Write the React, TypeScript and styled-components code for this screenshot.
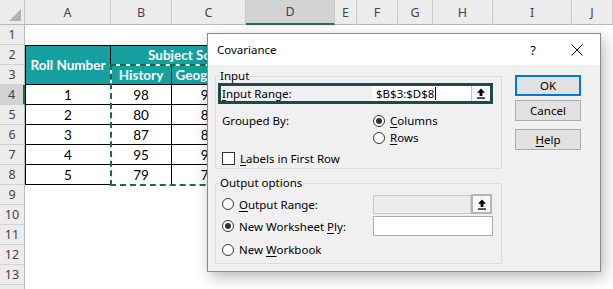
import styled, { createGlobalStyle } from 'styled-components';

const GlobalStyle = createGlobalStyle`
  html, body { margin: 0; padding: 0; background: #fff; }
  body { font-family: "Noto Sans", "Open Sans", sans-serif; }
`;

const columns = ['A', 'B', 'C', 'D', 'E', 'F', 'G', 'H', 'I', 'J'];
const rowCount = 14;
const labelledRows = 13;

const records = [
  { roll: 1, history: 98, geography: 92, economics: 88 },
  { roll: 2, history: 80, geography: 85, economics: 79 },
  { roll: 3, history: 87, geography: 84, economics: 91 },
  { roll: 4, history: 95, geography: 90, economics: 86 },
  { roll: 5, history: 79, geography: 75, economics: 82 },
];

const Page = styled.div`
  position: relative;
  width: 613px;
  height: 289px;
  overflow: hidden;
  background: #fff;
`;

const Sheet = styled.div`
  display: grid;
  grid-template-columns: 25px 86px 61px 74px 89px 22px 41px 35px 60px 79px 1fr;
  grid-template-rows: 25px repeat(${rowCount}, 20px);
  width: 613px;
  height: 289px;
`;

const Corner = styled.div`
  grid-column: 1;
  grid-row: 1;
  background: #ececec;
  border-right: 1px solid #c6c6c6;
  border-bottom: 1px solid #b9b9b9;
  box-sizing: border-box;
  display: flex;
  align-items: flex-end;
  justify-content: flex-end;
  padding: 0 3px 3px 0;
`;

const ColHead = styled.div<{ $col: number; $active?: boolean }>`
  grid-column: ${(p) => p.$col};
  grid-row: 1;
  box-sizing: border-box;
  display: flex;
  align-items: center;
  justify-content: center;
  background: ${(p) => (p.$active ? '#d3d3d3' : '#ececec')};
  border-right: 1px solid #c9c9c9;
  border-bottom: ${(p) => (p.$active ? '2px solid #217346' : '1px solid #b9b9b9')};
  font-size: 12.5px;
  color: #444;
`;

const RowHead = styled.div<{ $row: number; $active?: boolean }>`
  grid-column: 1;
  grid-row: ${(p) => p.$row};
  box-sizing: border-box;
  display: flex;
  align-items: center;
  justify-content: center;
  background: ${(p) => (p.$active ? '#d3d3d3' : '#ececec')};
  border-bottom: 1px solid #d2d2d2;
  border-right: ${(p) => (p.$active ? '2px solid #217346' : '1px solid #b9b9b9')};
  font-size: 12.5px;
  color: #444;
`;

const Cell = styled.div<{
  $col: string;
  $row: string;
  $teal?: boolean;
  $top?: boolean;
  $left?: boolean;
  $align?: string;
}>`
  grid-column: ${(p) => p.$col};
  grid-row: ${(p) => p.$row};
  box-sizing: border-box;
  display: flex;
  align-items: center;
  justify-content: ${(p) => p.$align || 'center'};
  padding: ${(p) => (p.$align ? '0 0 0 37px' : '0')};
  background: ${(p) => (p.$teal ? '#17a0a0' : '#fff')};
  color: ${(p) => (p.$teal ? '#fff' : '#000')};
  font-family: Lato, "Open Sans", sans-serif;
  font-size: 13.5px;
  font-weight: ${(p) => (p.$teal ? 700 : 400)};
  white-space: nowrap;
  overflow: hidden;
  border-right: 1px solid #000;
  border-bottom: 1px solid #000;
  border-top: ${(p) => (p.$top ? '1px solid #000' : 'none')};
  border-left: ${(p) => (p.$left ? '1px solid #000' : 'none')};
`;

const CopyMarquee = styled.div`
  grid-column: 3 / 6;
  grid-row: 4 / 10;
  margin: -1px 0 -1px -1px;
  position: relative;
  border: 2px solid #fff;
  pointer-events: none;

  &::after {
    content: '';
    position: absolute;
    inset: -2px;
    border: 2px dashed #1f6b43;
  }
`;

/* dialog */

const Dialog = styled.div`
  position: absolute;
  left: 207px;
  top: 33px;
  width: 394px;
  height: 239px;
  box-sizing: border-box;
  border: 1px solid #8a8a8a;
  background: #f0f0f0;
  box-shadow: 3px 5px 14px rgba(0, 0, 0, 0.28);
  font-family: "Noto Sans", "Open Sans", sans-serif;
  font-size: 11.5px;
  color: #000;
  display: flex;
  flex-direction: column;
`;

const TitleBar = styled.div`
  height: 31px;
  background: #fff;
  display: flex;
  align-items: center;
  padding: 0 17px 0 9px;
`;

const Title = styled.span`
  flex: 1;
  font-size: 11.5px;
`;

const HelpMark = styled.span`
  width: 12px;
  margin-right: 32px;
  text-align: center;
  font-size: 13px;
`;

const Body = styled.div`
  display: grid;
  grid-template-columns: 287px 66px;
  column-gap: 13px;
  align-items: start;
  padding: 4px 0 0 7px;
`;

const LeftColumn = styled.div`
  display: flex;
  flex-direction: column;
  gap: 7px;
`;

const Group = styled.fieldset<{ $h: number }>`
  margin: 0;
  padding: 0;
  min-width: 0;
  height: ${(p) => p.$h}px;
  box-sizing: border-box;
  border: 1px solid #dcdcdc;
`;

const Legend = styled.legend`
  margin-left: 3px;
  padding: 0 1px;
  line-height: 14px;
  font-size: 11.5px;
`;

const RangeBox = styled.div`
  margin-left: 2px;
  width: 275px;
  height: 21px;
  box-sizing: border-box;
  border: 3px solid #1c4b4a;
  display: flex;
  background: #f0f0f0;
`;

const RangeLabel = styled.span`
  flex: 1;
  padding-left: 1px;
  line-height: 15px;
`;

const RangeField = styled.div`
  width: 99px;
  background: #fff;
  display: flex;
  align-items: center;
  padding-left: 4px;
  box-sizing: border-box;
  line-height: 15px;
`;

const Caret = styled.span`
  width: 1px;
  height: 13px;
  background: #000;
  margin-left: 1px;
`;

const PickButton = styled.div<{ $framed?: boolean }>`
  width: ${(p) => (p.$framed ? 21 : 19)}px;
  height: ${(p) => (p.$framed ? 20 : 15)}px;
  box-sizing: border-box;
  display: flex;
  align-items: center;
  justify-content: center;
  background: #f7f7f7;
  border: ${(p) => (p.$framed ? '2px solid #b5b5b5' : 'none')};
  border-left: ${(p) => (p.$framed ? '2px solid #b5b5b5' : '1px solid #c4c4c4')};
`;

const GroupedRow = styled.div`
  display: flex;
  margin-top: 8px;
  padding-left: 6px;
`;

const FieldLabel = styled.span`
  width: 151px;
  line-height: 17px;
`;

const RadioStack = styled.div`
  display: flex;
  flex-direction: column;
`;

const Option = styled.label<{ $w?: number }>`
  display: flex;
  align-items: center;
  gap: 5px;
  height: 17px;
  width: ${(p) => (p.$w ? `${p.$w}px` : 'auto')};
  flex-shrink: 0;
`;

const Radio = styled.span<{ $checked?: boolean }>`
  width: 12px;
  height: 12px;
  box-sizing: border-box;
  border: 1px solid #333;
  border-radius: 50%;
  background: #fff;
  display: flex;
  align-items: center;
  justify-content: center;

  &::after {
    content: '';
    width: 6px;
    height: 6px;
    border-radius: 50%;
    background: ${(p) => (p.$checked ? '#333' : 'transparent')};
  }
`;

const Check = styled.span`
  width: 13px;
  height: 13px;
  box-sizing: border-box;
  border: 1px solid #333;
  background: #fff;
`;

const CheckRow = styled.div`
  margin-top: 4px;
  padding-left: 6px;
`;

const OutRow = styled.div<{ $gap: number; $h: number }>`
  display: flex;
  align-items: center;
  height: ${(p) => p.$h}px;
  margin-top: ${(p) => p.$gap}px;
  padding-left: 6px;
`;

const TextBox = styled.div<{ $w: number; $disabled?: boolean }>`
  width: ${(p) => p.$w}px;
  height: ${(p) => (p.$disabled ? 19 : 20)}px;
  box-sizing: border-box;
  border: 1px solid ${(p) => (p.$disabled ? '#cacaca' : '#adadad')};
  background: ${(p) => (p.$disabled ? '#ececec' : '#fff')};
`;

const Buttons = styled.div`
  display: flex;
  flex-direction: column;
`;

const Button = styled.div<{ $gap: number; $focus?: boolean }>`
  width: 66px;
  height: 21px;
  margin-top: ${(p) => p.$gap}px;
  box-sizing: border-box;
  display: flex;
  align-items: center;
  justify-content: center;
  background: #e1e1e1;
  border: ${(p) => (p.$focus ? '2px solid #0078d7' : '1px solid #adadad')};
`;

const U = styled.span`
  text-decoration: underline;
  text-underline-offset: 2px;
`;

const UpArrow = () => (
  <svg width="10" height="11" viewBox="0 0 10 11">
    <path d="M5 0.5 L9 4.8 H6.4 V8 H3.6 V4.8 H1 Z" fill="#000" />
    <rect x="1" y="9.4" width="8" height="1.3" fill="#000" />
  </svg>
);

const CloseIcon = () => (
  <svg width="12" height="12" viewBox="0 0 12 12">
    <path d="M0.5 0.5 L11.5 11.5 M11.5 0.5 L0.5 11.5" stroke="#000" strokeWidth="1" />
  </svg>
);

const CornerMark = () => (
  <svg width="12" height="12" viewBox="0 0 12 12">
    <path d="M12 0 V12 H0 Z" fill="#b3b3b3" />
  </svg>
);

const App = (): JSX.Element => (
  <>
    <GlobalStyle />
    <Page>
      <Sheet>
        <Corner>
          <CornerMark />
        </Corner>
        {columns.map((c, i) => (
          <ColHead key={c} $col={i + 2} $active={c === 'D'}>
            {c}
          </ColHead>
        ))}
        {Array.from({ length: rowCount }, (_, i) => (
          <RowHead key={i} $row={i + 2} $active={i + 1 === 4}>
            {i < labelledRows ? i + 1 : ''}
          </RowHead>
        ))}

        <Cell $col="2" $row="3 / 5" $teal $top $left>Roll Number</Cell>
        <Cell $col="3 / 6" $row="3" $teal $top $align="flex-start">Subject Scores</Cell>
        <Cell $col="3" $row="4" $teal>History</Cell>
        <Cell $col="4" $row="4" $teal>Geography</Cell>
        <Cell $col="5" $row="4" $teal>Economics</Cell>

        {records.map((r, i) => [
          <Cell key={`a${i}`} $col="2" $row={`${i + 5}`} $left>{r.roll}</Cell>,
          <Cell key={`b${i}`} $col="3" $row={`${i + 5}`}>{r.history}</Cell>,
          <Cell key={`c${i}`} $col="4" $row={`${i + 5}`}>{r.geography}</Cell>,
          <Cell key={`d${i}`} $col="5" $row={`${i + 5}`}>{r.economics}</Cell>,
        ])}

        <CopyMarquee />
      </Sheet>

      <Dialog>
        <TitleBar>
          <Title>Covariance</Title>
          <HelpMark>?</HelpMark>
          <CloseIcon />
        </TitleBar>

        <Body>
          <LeftColumn>
            <Group $h={100}>
              <Legend>Input</Legend>
              <RangeBox>
                <RangeLabel><U>I</U>nput Range:</RangeLabel>
                <RangeField>
                  $B$3:$D$8
                  <Caret />
                </RangeField>
                <PickButton>
                  <UpArrow />
                </PickButton>
              </RangeBox>

              <GroupedRow>
                <FieldLabel>Grouped By:</FieldLabel>
                <RadioStack>
                  <Option>
                    <Radio $checked />
                    <span><U>C</U>olumns</span>
                  </Option>
                  <Option>
                    <Radio />
                    <span><U>R</U>ows</span>
                  </Option>
                </RadioStack>
              </GroupedRow>

              <CheckRow>
                <Option>
                  <Check />
                  <span><U>L</U>abels in First Row</span>
                </Option>
              </CheckRow>
            </Group>

            <Group $h={88}>
              <Legend>Output options</Legend>
              <OutRow $gap={4} $h={20}>
                <Option $w={151}>
                  <Radio />
                  <span><U>O</U>utput Range:</span>
                </Option>
                <TextBox $w={98} $disabled />
                <PickButton $framed>
                  <UpArrow />
                </PickButton>
              </OutRow>
              <OutRow $gap={2} $h={20}>
                <Option $w={151}>
                  <Radio $checked />
                  <span>New Worksheet <U>P</U>ly:</span>
                </Option>
                <TextBox $w={120} />
              </OutRow>
              <OutRow $gap={5} $h={17}>
                <Option>
                  <Radio />
                  <span>New <U>W</U>orkbook</span>
                </Option>
              </OutRow>
            </Group>
          </LeftColumn>

          <Buttons>
            <Button $gap={6} $focus>OK</Button>
            <Button $gap={4}>Cancel</Button>
            <Button $gap={8}><U>H</U>elp</Button>
          </Buttons>
        </Body>
      </Dialog>
    </Page>
  </>
);

export default App;
